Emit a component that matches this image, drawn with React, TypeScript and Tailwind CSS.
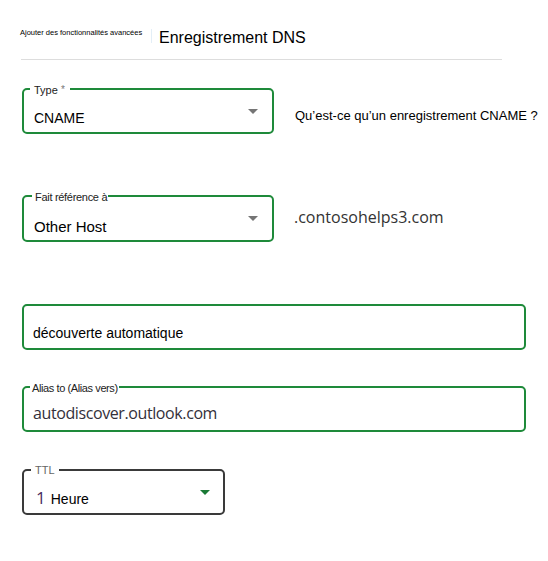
import React from "react";

const Caret = ({ color }: { color: string }) => (
  <svg width="10" height="5" viewBox="0 0 10 5" className="shrink-0">
    <path d="M0 0h10L5 5z" fill={color} />
  </svg>
);

export default function App() {
  return (
    <div className="w-[548px] h-[561px] bg-white text-black font-['Liberation_Sans',Arial,sans-serif]">
      {/* Header */}
      <div className="flex items-start pt-[28px] pl-[20px]">
        <span className="w-[131px] text-[7.5px] leading-[10px] whitespace-nowrap">
          Ajouter des fonctionnalités avancées
        </span>
        <div className="w-px h-[14px] mt-[1px] bg-[#e3eef7]" />
        <h1 className="ml-[7px] text-[16px] leading-[20px]">Enregistrement DNS</h1>
      </div>
      <div className="ml-[21px] mt-[11px] w-[481px] border-t border-[#dddddd]" />

      {/* Type */}
      <div className="flex items-center mt-[28px] ml-[22px]">
        <div className="relative flex items-center justify-between w-[252px] h-[46px] border-2 border-[#1e8a3a] rounded-[5px] pl-[10px] pr-[14px]">
          <span className="absolute left-[6px] top-[-6px] bg-white pl-[4px] pr-[5px] text-[11px] leading-[12px] text-[#222]">
            Type <span className="text-[#777] align-top text-[10px]">*</span>
          </span>
          <span className="pt-[14px] text-[14px] leading-[16px]">CNAME</span>
          <Caret color="#757575" />
        </div>
        <span className="ml-[21px] pt-[8px] text-[13px] leading-[15px]">
          Qu’est-ce qu’un enregistrement CNAME ?
        </span>
      </div>

      {/* Fait référence à */}
      <div className="flex items-center mt-[61px] ml-[22px]">
        <div className="relative flex items-center justify-between w-[252px] h-[47px] border-2 border-[#1e8a3a] rounded-[5px] pl-[10px] pr-[14px]">
          <span className="absolute left-[8px] top-[-6px] bg-white pl-[3px] pr-[1px] text-[11px] leading-[12px] tracking-[-0.3px] text-[#222]">
            Fait référence à
          </span>
          <span className="pt-[15px] text-[15px] leading-[17px]">Other Host</span>
          <Caret color="#757575" />
        </div>
        <span className="ml-[20px] mb-[4px] font-['Open_Sans',sans-serif] text-[16px] leading-[20px] text-[#333]">
          .contosohelps3.com
        </span>
      </div>

      {/* Nom */}
      <div className="flex items-center mt-[62px] ml-[22px] w-[504px] h-[46px] border-2 border-[#1e8a3a] rounded-[5px] pl-[9px]">
        <span className="pt-[11px] text-[14px] leading-[16px]">découverte automatique</span>
      </div>

      {/* Alias */}
      <div className="relative flex items-center mt-[36px] ml-[22px] w-[504px] h-[46px] border-2 border-[#1e8a3a] rounded-[5px] pl-[9px]">
        <span className="absolute left-[6px] top-[-6px] bg-white pl-[2px] pr-[1px] text-[11px] leading-[12px] tracking-[-0.4px] text-[#222]">
          Alias to (Alias vers)
        </span>
        <span className="pt-[8px] font-['Open_Sans',sans-serif] text-[16px] leading-[22px] tracking-[-0.4px] text-[#33303a]">
          autodiscover.outlook.com
        </span>
      </div>

      {/* TTL */}
      <div className="relative flex items-center justify-between mt-[37px] ml-[22px] w-[203px] h-[46px] border-2 border-[#3a3a3a] rounded-[5px] pl-[12px] pr-[13px]">
        <span className="absolute left-[7px] top-[-7px] bg-white px-[4px] text-[11px] leading-[12px] text-[#666]">
          TTL
        </span>
        <span className="flex items-baseline gap-[5px] pt-[13px] leading-[16px]">
          <span className="font-['Open_Sans',sans-serif] text-[17px] text-[#4a2d5e]">1</span>
          <span className="text-[14px]">Heure</span>
        </span>
        <Caret color="#1a7a36" />
      </div>
    </div>
  );
}
